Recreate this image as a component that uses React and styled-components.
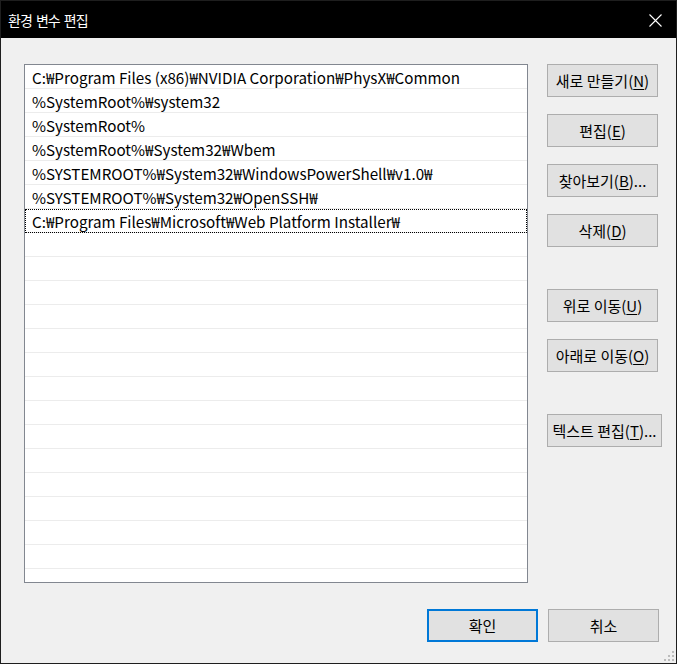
import styled, { createGlobalStyle } from "styled-components";

const Global = createGlobalStyle`
  html, body { margin: 0; padding: 0; background: #f0f0f0; }
  body { font-family: "Noto Sans CJK KR", "Noto Sans", sans-serif; }
`;

/* 창 전체 */
const Window = styled.div`
  position: relative;
  box-sizing: border-box;
  width: 677px;
  height: 664px;
  border: 1px solid #1e1e1e;
  background: #f0f0f0;
  display: flex;
  flex-direction: column;
`;

/* 제목 표시줄 */
const TitleBar = styled.div`
  height: 37px;
  flex-shrink: 0;
  background: #000;
  color: #fff;
  display: flex;
  align-items: center;
  justify-content: space-between;
  padding: 0 14px 0 7px;
  font-size: 14px;
  letter-spacing: -1px;
  word-spacing: 2px;
`;

const CloseIcon = styled.svg`
  width: 13px;
  height: 13px;
  margin-top: 1px;
`;

/* 본문 */
const Body = styled.div`
  display: flex;
  padding: 26px 0 0 23px;
  gap: 19px;
`;

/* 경로 목록 */
const List = styled.ul`
  box-sizing: border-box;
  width: 504px;
  height: 519px;
  margin: 0;
  padding: 0;
  list-style: none;
  background: #fff;
  border: 1px solid #828790;
  overflow: hidden;
`;

const Row = styled.li`
  box-sizing: border-box;
  height: 24px;
  padding: 0 7px;
  border-bottom: 1px solid #ececec;
  outline: ${(p) => (p.$focused ? "1px dotted #000" : "none")};
  outline-offset: -1px;
  display: flex;
  align-items: center;
  font-size: 15.2px;
  color: #000;
  white-space: nowrap;
`;

/* 오른쪽 버튼 모음 */
const Side = styled.div`
  display: flex;
  flex-direction: column;
`;

const Group = styled.div`
  display: flex;
  flex-direction: column;
  gap: 17px;
  margin-bottom: ${(p) => p.$after || 0}px;
`;

const Button = styled.button`
  box-sizing: border-box;
  width: ${(p) => p.$w || 111}px;
  height: 33px;
  padding: 0;
  background: #e1e1e1;
  border: ${(p) => (p.$primary ? "2px solid #0078d7" : "1px solid #adadad")};
  font-family: inherit;
  font-size: 15px;
  color: #000;
  white-space: nowrap;
  cursor: default;
  u { text-underline-offset: 2px; }
`;

/* 아래 확인/취소 */
const Footer = styled.div`
  display: flex;
  justify-content: flex-end;
  gap: 10px;
  padding: 26px 17px 0 0;
`;

const Grip = styled.svg`
  position: absolute;
  right: 1px;
  bottom: 1px;
  width: 12px;
  height: 12px;
`;

const paths = [
  "C:₩Program Files (x86)₩NVIDIA Corporation₩PhysX₩Common",
  "%SystemRoot%₩system32",
  "%SystemRoot%",
  "%SystemRoot%₩System32₩Wbem",
  "%SYSTEMROOT%₩System32₩WindowsPowerShell₩v1.0₩",
  "%SYSTEMROOT%₩System32₩OpenSSH₩",
  "C:₩Program Files₩Microsoft₩Web Platform Installer₩",
];

const rows = [...paths, ...Array(15).fill("")];

const App = () => {
  return (
    <>
      <Global />
      <Window>
        <TitleBar>
          <span>환경 변수 편집</span>
          <CloseIcon viewBox="0 0 13 13">
            <path d="M0.5 0.5 L12.5 12.5 M12.5 0.5 L0.5 12.5" stroke="#fff" strokeWidth="1.1" />
          </CloseIcon>
        </TitleBar>
        <Body>
          <List>
            {rows.map((r, i) => (
              <Row key={i} $focused={i === 6}>
                {r}
              </Row>
            ))}
          </List>
          <Side>
            <Group $after={42}>
              <Button>새로 만들기(<u>N</u>)</Button>
              <Button>편집(<u>E</u>)</Button>
              <Button>찾아보기(<u>B</u>)...</Button>
              <Button>삭제(<u>D</u>)</Button>
            </Group>
            <Group $after={42}>
              <Button>위로 이동(<u>U</u>)</Button>
              <Button>아래로 이동(<u>O</u>)</Button>
            </Group>
            <Group>
              <Button $w={115}>텍스트 편집(<u>T</u>)...</Button>
            </Group>
          </Side>
        </Body>
        <Footer>
          <Button $primary>확인</Button>
          <Button>취소</Button>
        </Footer>
        <Grip viewBox="0 0 12 12">
          {[
            [8, 0], [8, 4], [4, 4], [8, 8], [4, 8], [0, 8],
          ].map(([x, y], i) => (
            <rect key={i} x={x + 1} y={y + 1} width="2" height="2" fill="#bcbcbc" />
          ))}
        </Grip>
      </Window>
    </>
  );
};

export default App;
